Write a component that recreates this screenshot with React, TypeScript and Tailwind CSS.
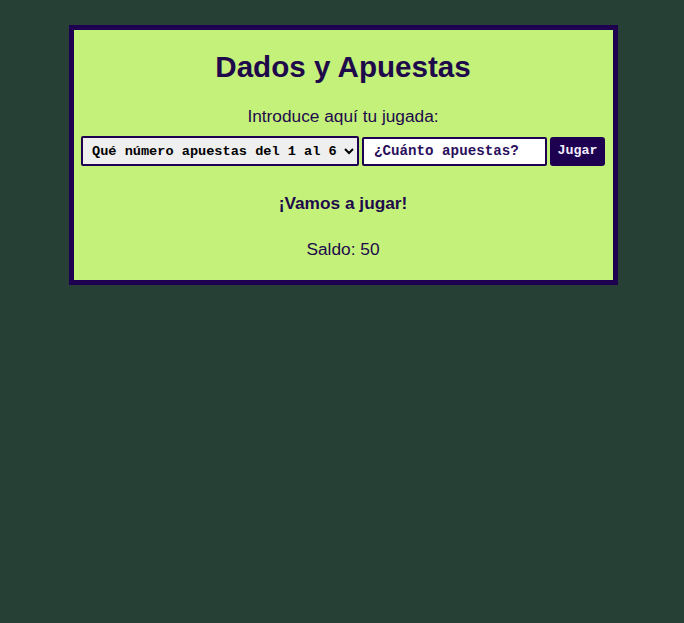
import { useState } from "react";

const App = () => {
  const [numero, setNumero] = useState("");
  const [apuesta, setApuesta] = useState("");

  return (
    <div className="min-h-[623px] bg-[#264035] pt-[25px] pl-[2px] font-['Liberation_Sans',Arial,sans-serif] text-[#1e0a4b]">
      <div className="mx-auto w-[549px] border-[5px] border-[#1e0050] bg-[#c4f17a] pt-[20px] pb-[21px] text-center">
        <h1 className="text-[29.6px] font-bold leading-[34px]">Dados y Apuestas</h1>

        <p className="mt-[22px] text-[17.3px] leading-[20px]">Introduce aquí tu jugada:</p>

        {/* Formulario de apuesta */}
        <form
          className="mt-[10px] flex items-center justify-center gap-[3px] font-['Liberation_Mono',monospace] font-bold"
          onSubmit={(e) => e.preventDefault()}
        >
          <select
            value={numero}
            onChange={(e) => setNumero(e.target.value)}
            className="h-[30px] w-[278px] rounded-[2px] border-2 border-[#1e0050] bg-[#efefef] pl-[5px] text-[13.6px] text-black"
          >
            <option value="">Qué número apuestas del 1 al 6</option>
            {[1, 2, 3, 4, 5, 6].map((n) => (
              <option key={n} value={n}>
                {n}
              </option>
            ))}
          </select>
          <input
            type="number"
            value={apuesta}
            onChange={(e) => setApuesta(e.target.value)}
            placeholder="¿Cuánto apuestas?"
            className="h-[29px] w-[185px] rounded-[2px] border-2 border-[#1e0050] bg-white pl-[10px] text-[14.2px] text-[#1e0a4b] placeholder:text-[#2a0f5c] outline-none"
          />
          <button
            type="submit"
            className="h-[29px] w-[55px] rounded-[3px] bg-[#1e0050] text-[13.33px] text-[#f3eefc]"
          >
            Jugar
          </button>
        </form>

        <p className="mt-[27px] text-[17.3px] font-bold leading-[20px]">¡Vamos a jugar!</p>

        <p className="mt-[26px] text-[17.3px] leading-[20px]">Saldo: 50</p>
      </div>
    </div>
  );
};

export default App;
